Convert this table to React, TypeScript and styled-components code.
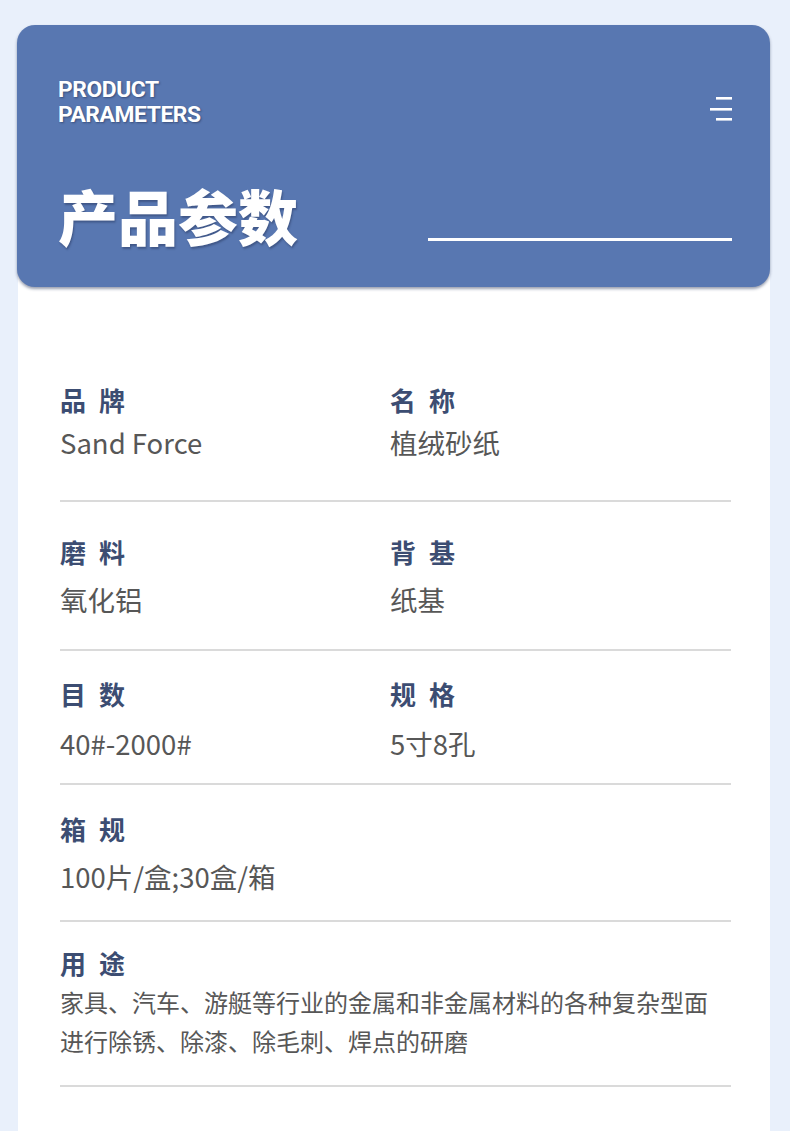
import React from "react"
import styled, { createGlobalStyle } from "styled-components"

type Param = {
  label: string
  value: string
  label2?: string
  value2?: string
  pt: number
  gap: number
  pb: number
}

const params: Param[] = [
  { label: "品 牌", value: "Sand Force", label2: "名 称", value2: "植绒砂纸", pt: 95, gap: 4, pb: 38 },
  { label: "磨 料", value: "氧化铝", label2: "背 基", value2: "纸基", pt: 32, gap: 9, pb: 30 },
  { label: "目 数", value: "40#-2000#", label2: "规 格", value2: "5寸8孔", pt: 25, gap: 11, pb: 20 },
  { label: "箱 规", value: "100片/盒;30盒/箱", pt: 26, gap: 9, pb: 24 },
]

const GlobalStyle = createGlobalStyle`
  html, body {
    margin: 0;
    padding: 0;
    height: 100%;
    overflow: hidden;
    background: #e9f0fb;
  }
  body {
    font-family: "Noto Sans CJK SC", "Noto Sans", sans-serif;
  }
`

const Page = styled.div`
  padding: 25px 20px 0 18px;
`

const Card = styled.div`
  width: 752px;
  min-height: 1106px;
  background: #fff;
  border-radius: 18px 18px 0 0;
`

const Header = styled.header`
  margin-left: -1px;
  height: 262px;
  box-sizing: border-box;
  padding: 52px 38px 0 41px;
  background: #5877b1;
  border-radius: 18px;
  box-shadow: 0 2px 3px rgba(30, 45, 80, 0.45);
  display: flex;
  flex-direction: column;
`

const TopRow = styled.div`
  display: flex;
  justify-content: space-between;
  align-items: flex-start;
`

const Eyebrow = styled.div`
  font-family: Roboto, "Liberation Sans", sans-serif;
  font-weight: 700;
  font-size: 22.8px;
  line-height: 25px;
  letter-spacing: -0.4px;
  color: #fff;
  text-shadow: 1px 1px 2px rgba(20, 30, 60, 0.45);
`

const MenuIcon = styled.svg`
  margin-top: 20px;
  display: block;
`

const TitleRow = styled.div`
  margin-top: 58px;
  display: flex;
  justify-content: space-between;
  align-items: flex-end;
`

const Title = styled.h1`
  margin: 0;
  font-family: "Noto Sans CJK SC", sans-serif;
  font-weight: 900;
  font-size: 60px;
  line-height: 60px;
  color: #fff;
  text-shadow: 1px 2px 2px rgba(20, 30, 60, 0.35);
`

const TitleLine = styled.div`
  width: 304px;
  height: 3px;
  margin-bottom: 4px;
  background: #fff;
`

const Body = styled.div`
  padding: 0 39px 0 42px;
`

const Row = styled.div<{ $pt: number; $gap: number; $pb: number }>`
  display: grid;
  grid-template-columns: 330px 1fr;
  grid-template-rows: auto auto;
  row-gap: ${(p) => p.$gap}px;
  padding: ${(p) => p.$pt}px 0 ${(p) => p.$pb}px;
  border-bottom: 2px solid #dadada;
`

const Label = styled.div`
  font-weight: 700;
  font-size: 26px;
  line-height: 36px;
  letter-spacing: 3.5px;
  color: #3c4d72;
`

const Value = styled.div`
  font-size: 27.5px;
  line-height: 40px;
  color: #575757;
`

const UsageRow = styled.div`
  padding: 23px 0 25px;
  border-bottom: 2px solid #dadada;
`

const Usage = styled.p`
  margin: 1px 0 0;
  font-size: 24px;
  line-height: 39px;
  color: #575757;
`

export default function App() {
  return (
    <>
      <GlobalStyle />
      <Page>
        <Card>
          <Header>
            <TopRow>
              <Eyebrow>
                PRODUCT
                <br />
                PARAMETERS
              </Eyebrow>
              <MenuIcon width="22" height="24" viewBox="0 0 22 24">
                <rect x="6" y="0" width="16" height="2.6" fill="#fff" />
                <rect x="0" y="11" width="22" height="2.6" fill="#fff" />
                <rect x="6" y="21" width="16" height="2.6" fill="#fff" />
              </MenuIcon>
            </TopRow>
            <TitleRow>
              <Title>产品参数</Title>
              <TitleLine />
            </TitleRow>
          </Header>
          <Body>
            {params.map((p) => (
              <Row key={p.label} $pt={p.pt} $gap={p.gap} $pb={p.pb}>
                <Label>{p.label}</Label>
                <Label>{p.label2}</Label>
                <Value>{p.value}</Value>
                <Value>{p.value2}</Value>
              </Row>
            ))}
            <UsageRow>
              <Label>用 途</Label>
              <Usage>
                家具、汽车、游艇等行业的金属和非金属材料的各种复杂型面
                <br />
                进行除锈、除漆、除毛刺、焊点的研磨
              </Usage>
            </UsageRow>
          </Body>
        </Card>
      </Page>
    </>
  )
}
